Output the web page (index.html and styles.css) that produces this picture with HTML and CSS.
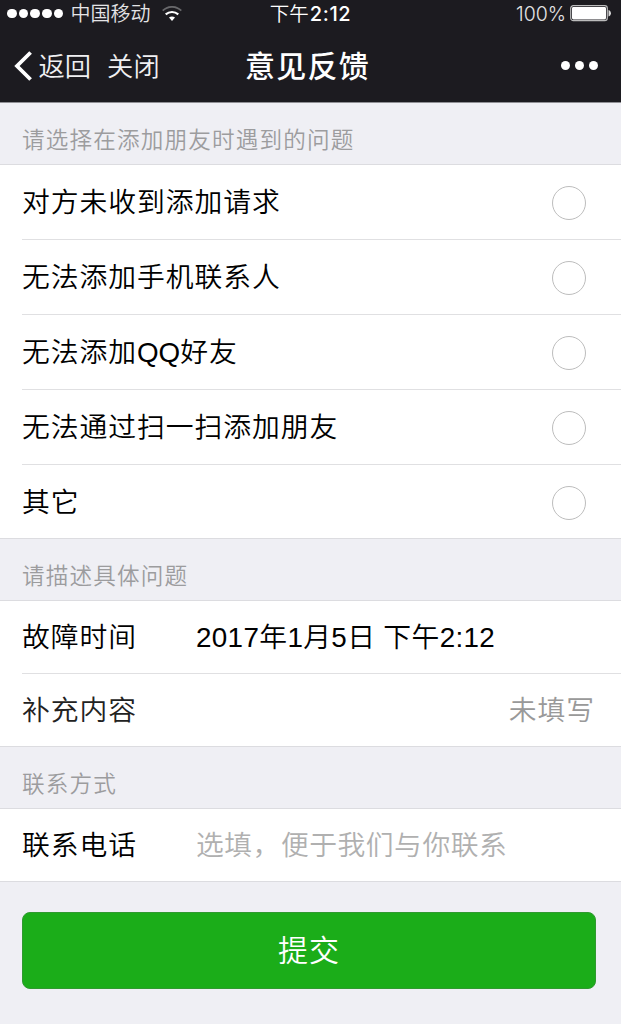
FILE: index.html
```html
<!DOCTYPE html>
<html lang="zh-CN">
<head>
    <meta charset="UTF-8">
    <meta name="viewport" content="width=device-width, initial-scale=1.0">
    <title>意见反馈</title>
    <link rel="stylesheet" href="styles.css">
</head>
<body>
    <header class="header">
        <div class="status-bar">
            <div class="status-left">
                <div class="signal">
                    <i class="signal-dot"></i>
                    <i class="signal-dot"></i>
                    <i class="signal-dot"></i>
                    <i class="signal-dot"></i>
                    <i class="signal-dot"></i>
                </div>
                <span class="carrier">中国移动</span>
                <svg class="wifi" width="20" height="16" viewBox="0 0 20 16" fill="none" stroke="#fff" stroke-width="1.8">
                    <path d="M0.7 4.7 C6 -0.4 14 -0.4 19.3 4.7" stroke="#68686b"/>
                    <path d="M3.7 8.4 C7.4 5.2 12.6 5.2 16.3 8.4" stroke-width="2.1"/>
                    <path d="M7 11.6 C8.7 10.2 11.3 10.2 13 11.6 L10 15 Z" fill="#fff" stroke="none"/>
                </svg>
            </div>
            <div class="clock">下午<span class="digits">2:12</span></div>
            <div class="status-right">
                <span class="percent">100%</span>
                <svg class="battery" width="41" height="17" viewBox="0 0 41 17">
                    <rect x="0.7" y="0.7" width="36.6" height="15" rx="2.6" fill="none" stroke="#bbb" stroke-width="1.2"/>
                    <rect x="2" y="2" width="34" height="12.4" rx="1.4" fill="#fff"/>
                    <path d="M38.5 5 C41.7 5.5 41.7 11 38.5 11.5 Z" fill="#ddd"/>
                </svg>
            </div>
        </div>
        <nav class="nav-bar">
            <div class="nav-left">
                <svg class="back-icon" width="18" height="30" viewBox="0 0 18 30" fill="none" stroke="#fff" stroke-width="3.8">
                    <path d="M16.6 1.5 L3 15 L16.6 28.5"/>
                </svg>
                <span class="back">返回</span>
                <span class="close">关闭</span>
            </div>
            <h1 class="title">意见反馈</h1>
            <div class="more">
                <i class="more-dot"></i>
                <i class="more-dot"></i>
                <i class="more-dot"></i>
            </div>
        </nav>
    </header>

    <main>
        <h2 class="hint">请选择在添加朋友时遇到的问题</h2>
        <ul class="list options">
            <li class="row"><span>对方未收到添加请求</span><i class="radio"></i></li>
            <li class="row"><span>无法添加手机联系人</span><i class="radio"></i></li>
            <li class="row"><span>无法添加<span class="latin">QQ</span>好友</span><i class="radio"></i></li>
            <li class="row"><span>无法通过扫一扫添加朋友</span><i class="radio"></i></li>
            <li class="row"><span>其它</span><i class="radio"></i></li>
        </ul>

        <h2 class="hint">请描述具体问题</h2>
        <ul class="list fields">
            <li class="row">
                <span class="label">故障时间</span>
                <span class="value">2017年1月5日 下午2:12</span>
            </li>
            <li class="row">
                <span class="label soft">补充内容</span>
                <span class="empty">未填写</span>
            </li>
        </ul>

        <h2 class="hint">联系方式</h2>
        <ul class="list fields">
            <li class="row">
                <span class="label">联系电话</span>
                <span class="placeholder">选填，便于我们与你联系</span>
            </li>
        </ul>

        <button class="submit" type="button">提交</button>
    </main>
</body>
</html>
```
FILE: styles.css
```css
* {
    box-sizing: border-box;
}

body {
    margin: 0;
    height: 1024px;
    overflow: hidden;
    background: #efeff4;
    color: #000;
    font-family: "Liberation Sans", "Noto Sans CJK SC", sans-serif;
    font-weight: 350;
}

.header {
    height: 103px;
    background: #1c1b20;
    border-bottom: 1px solid #909095;
    color: #fff;
}

.status-bar,
.nav-bar {
    display: grid;
    grid-template-columns: 1fr auto 1fr;
    align-items: center;
}

.status-bar {
    height: 27px;
    padding: 0 10px 0 7px;
    font-size: 20px;
    line-height: 26px;
}

.status-left,
.status-right,
.signal {
    display: flex;
    align-items: center;
}

.signal {
    gap: 2px;
}

.signal-dot {
    width: 9.7px;
    height: 9.7px;
    border-radius: 50%;
    background: #fff;
}

.carrier {
    margin-left: 7px;
    color: #e4e4e6;
}

.wifi {
    margin-left: 12px;
}

.clock {
    padding-left: 3px;
    font-size: 19.5px;
}

.digits {
    margin-left: 1px;
    font-family: Inter, sans-serif;
    font-weight: 500;
    font-size: 20px;
    letter-spacing: 0.6px;
}

.status-right {
    justify-content: flex-end;
}

.percent {
    margin-right: 4px;
    color: #e4e4e6;
    font-family: Inter, sans-serif;
    font-size: 19.5px;
}

.nav-bar {
    height: 75px;
    padding: 3px 23px 0 14px;
    line-height: 40px;
}

.nav-left {
    display: flex;
    align-items: center;
    font-size: 26.3px;
    color: #f0f0f2;
}

.back {
    margin-left: 6.5px;
    padding-top: 2px;
}

.close {
    margin-left: 16px;
    padding-top: 2px;
}

.title {
    margin: 0;
    padding: 1px 0 0 3px;
    font-size: 30px;
    font-weight: 500;
    letter-spacing: 1.2px;
}

.more {
    display: flex;
    justify-content: flex-end;
    gap: 5px;
    padding-bottom: 1px;
}

.more-dot {
    width: 9px;
    height: 9px;
    border-radius: 50%;
    background: #fff;
}

.hint {
    margin: 0;
    height: 61px;
    padding: 21px 22px 0;
    font-size: 22.6px;
    font-weight: 350;
    line-height: 33px;
    letter-spacing: 1.15px;
    color: #9c9c9e;
}

.list {
    margin: 0;
    padding: 0 0 0 22px;
    list-style: none;
    background: #fff;
    border-top: 1px solid #dcdce0;
    border-bottom: 1px solid #dcdce0;
    font-size: 27.8px;
    line-height: 40px;
    letter-spacing: 0.95px;
}

.row {
    display: flex;
    align-items: center;
    height: 75px;
    padding-top: 2px;
    border-bottom: 1px solid #e0e0e2;
}

.row:last-child {
    height: 73px;
    border-bottom: none;
}

.options .row {
    justify-content: space-between;
    padding-right: 35px;
}

.radio {
    width: 34px;
    height: 34px;
    border: 1px solid #bdbdbd;
    border-radius: 50%;
}

.latin {
    letter-spacing: 0;
}

.fields .row {
    height: 73px;
    padding-right: 26px;
}

.fields .row:last-child {
    height: 72px;
}

.label {
    width: 174px;
}

.soft {
    color: #222;
}

.value {
    letter-spacing: 0.35px;
}

.empty {
    margin-left: auto;
    color: #999;
}

.placeholder {
    color: #b0b0b0;
    letter-spacing: 0.5px;
}

.submit {
    display: block;
    width: 574px;
    height: 77px;
    margin: 30px 0 0 22px;
    padding: 0 0 5px;
    border: 1px solid #2f9a2f;
    border-radius: 8px;
    background: #1bad19;
    color: #fff;
    font-family: inherit;
    font-size: 30px;
    font-weight: 350;
    letter-spacing: 1px;
}
```
